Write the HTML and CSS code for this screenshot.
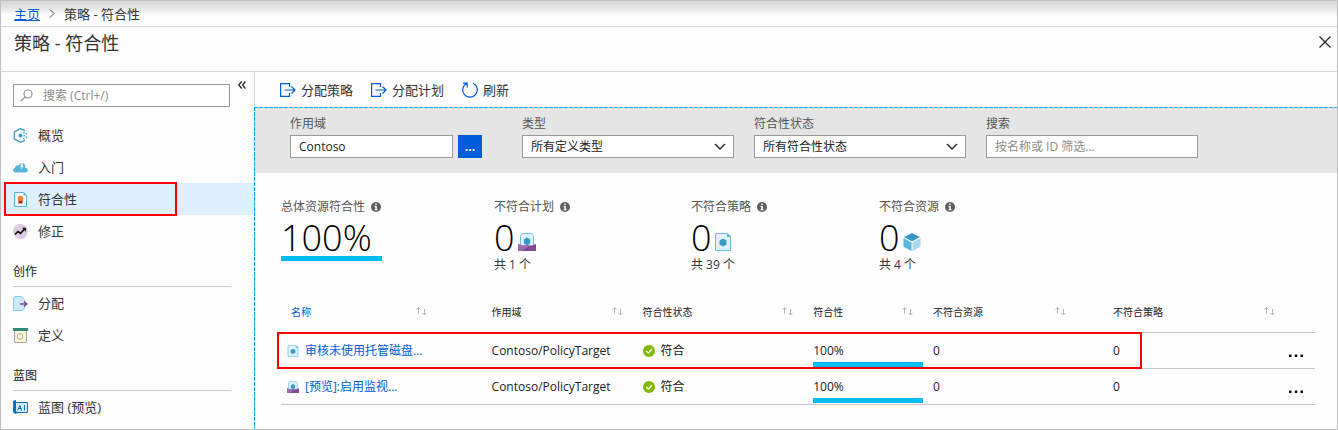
FILE: index.html
```html
<!DOCTYPE html>
<html lang="zh-CN">
<head>
<meta charset="utf-8">
<title>策略 - 符合性</title>
<link rel="stylesheet" href="styles.css">
</head>
<body>
<svg class="defs" aria-hidden="true">
  <symbol id="policy" viewBox="0 0 16 18"><path fill="#dff1f8" stroke="#6cbfdf" d="M.5.5h12l3 3v14H.5z"/><path fill="#59b4d9" d="M12 0l4 4h-4z"/><path fill="#3999c6" d="M8 5.500l3.500 2v4L8 13.500 4.500 11.500v-4z"/></symbol>
  <symbol id="initiative" viewBox="0 0 18 18"><path fill="#dff1f8" stroke="#6cbfdf" d="M2.500 14V2.500l2-2h9l2 2V14z"/><path fill="#3999c6" d="M9 4.500l3.200 2v4L9 12.500l-3.200-2v-4z"/><path fill="#804998" d="M0 11l4 1.500h10L18 11v7H0z"/><path fill="#9b6bb0" d="M0 11l4 1.500h8L4 18H0z"/></symbol>
  <symbol id="info" viewBox="0 0 10 10"><circle cx="5" cy="5" r="5" fill="#5e5e5e"/><path fill="#fff" d="M4.200 1.500h1.600v1.600H4.200zM3.500 4h2.300v3.300h.8v1H3.500v-1h.8V5h-.8z"/></symbol>
  <symbol id="assign" viewBox="0 0 16 14"><path fill="none" stroke="#015cda" stroke-width="1.200" d="M9.500 4V.6H.6v12.800h8.900V10M4.500 7H15M11.500 3.500L15 7l-3.500 3.500"/></symbol>
  <symbol id="chevron" viewBox="0 0 12 8"><path fill="none" stroke="#222" stroke-width="1.400" d="M1 1l5 5 5-5"/></symbol>
  <symbol id="sort" viewBox="0 0 12 10"><path fill="none" stroke="#b5b5b5" d="M2.500 6.500v-6M.5 2.500l2-2 2 2M8.500 2v6M6.500 6l2 2 2-2"/></symbol>
  <symbol id="check" viewBox="0 0 12 12"><circle cx="6" cy="6" r="6" fill="#7fba00"/><path fill="none" stroke="#fff" stroke-width="1.400" d="M3.200 6.100l2.100 2 3.500-3.900"/></symbol>
</svg>
<div class="portal">
  <nav class="breadcrumb" aria-label="导航">
    <a href="#">主页</a>
    <svg width="6" height="9" viewBox="0 0 6 9"><path fill="none" stroke="#444" d="M1 .5l4 4-4 4"/></svg>
    <span>策略 - 符合性</span>
  </nav>
  <header class="title">
    <h1>策略 - 符合性</h1>
    <button class="plain" aria-label="关闭"><svg width="12" height="12" viewBox="0 0 12 12"><path fill="none" stroke="#222" stroke-width="1.200" d="M.5.5l11 11M11.500.5l-11 11"/></svg></button>
  </header>
  <div class="body">
    <aside class="sidebar">
      <div class="search-row">
        <label class="search">
          <svg width="13" height="13" viewBox="0 0 13 13"><path fill="none" stroke="#888" stroke-width="1.200" d="M.8 12.200l4.400-4.400"/><circle cx="8" cy="5" r="4" fill="none" stroke="#888" stroke-width="1.100"/></svg>
          <input type="text" aria-label="搜索" placeholder="搜索 (Ctrl+/)">
        </label>
        <button class="plain" aria-label="折叠"><svg width="8" height="8" viewBox="0 0 8 8"><path fill="none" stroke="#222" stroke-width="1.200" d="M3.700.5L.8 4l2.900 3.500M7.400.5L4.500 4l2.900 3.500"/></svg></button>
      </div>
      <ul class="menu">
        <li><a href="#"><svg width="15" height="15" viewBox="0 0 15 15"><path fill="none" stroke="#3999c6" stroke-width="1.300" d="M12 2.600L7.500.7 1.300 4v7l6.200 3.300L12 12.400M1.300 6V4l2-1M1.300 9v2l2 1"/><circle cx="7.500" cy="7.500" r="2" fill="#3999c6"/><path fill="#59b4d9" d="M10 4h1.500v1.500H10zM12.500 5H14v1.500h-1.500zM10.500 7H12v1.500h-1.500zM12.500 8.500H14V10h-1.500zM10 10h1.500v1.500H10z"/></svg>概览</a></li>
        <li><a href="#"><svg width="15" height="15" viewBox="0 0 15 15"><path fill="#59b4d9" d="M2.500 12.500C-.6 12.300-.5 8.200 2 8c-.2-2.500 2.500-3.500 3.800-2.200C6.500 2.500 11.500 1.600 12.200 6v1.800c3.300.2 3.600 4.500.5 4.700z"/><path fill="#fff" d="M8.500 3l1.500 1-.8 2h1.300L8 9.500l.5-2.500H7.500z"/></svg>入门</a></li>
        <li class="active"><a href="#" aria-current="page"><svg width="15" height="15" viewBox="0 0 15 15"><path fill="#eef8fc" stroke="#59b4d9" d="M1.500.5h9l3 3v11h-12z"/><path fill="#59b4d9" d="M10.500 0l3.500 3.500h-3.500z"/><path fill="#ba141a" d="M5.500 7.500h4V12l-2-1-2 1z"/><circle cx="7.500" cy="6.500" r="2.700" fill="#f58220"/></svg>符合性</a></li>
        <li><a href="#"><svg width="15" height="15" viewBox="0 0 15 15"><circle cx="7.500" cy="7.500" r="7.500" fill="#dccbe5"/><path fill="none" stroke="#111" stroke-width="1.700" d="M2 10.500l3-3 2.500 1.800 4-4.300"/><path fill="#111" d="M9 3.800h4v4z"/></svg>修正</a></li>
      </ul>
      <h2>创作</h2>
      <ul class="menu">
        <li><a href="#"><svg width="15" height="15" viewBox="0 0 15 15"><path fill="#cdebf7" stroke="#84cbe5" d="M.5 14.500V1.500l1.500-1h6.500L11.500 4v8.500l-2 2z"/><path fill="none" stroke="#804998" stroke-width="1.500" d="M7 8h6.500M11 5.500L13.800 8 11 10.500"/></svg>分配</a></li>
        <li><a href="#"><svg width="15" height="15" viewBox="0 0 15 15"><path fill="#fff3d6" stroke="#a5a5a0" d="M1.500 2.500h12v12h-12z"/><path fill="#2c8b76" d="M0 0h15v3H0z"/><circle cx="7" cy="8.500" r="2.800" fill="none" stroke="#9fae9f"/></svg>定义</a></li>
      </ul>
      <h2>蓝图</h2>
      <ul class="menu">
        <li><a href="#"><svg width="15" height="15" viewBox="0 0 15 15"><path fill="#d5edfa" stroke="#0072c6" d="M2.500 2.500h12v10h-12z"/><path fill="#0072c6" d="M0 1l3-1v11l2 2-3 1-2-2z"/><path fill="none" stroke="#0072c6" d="M4.500 10.500l2.500-5 1.500 5M5.500 8.500h3M11.500 5v5.500"/></svg>蓝图 (预览)</a></li>
      </ul>
    </aside>
    <main>
      <div class="toolbar">
        <button class="plain"><svg width="16" height="14"><use href="#assign"/></svg>分配策略</button>
        <button class="plain"><svg width="16" height="14"><use href="#assign"/></svg>分配计划</button>
        <button class="plain"><svg width="16" height="16" viewBox="0 0 16 16"><path fill="none" stroke="#015cda" stroke-width="1.200" d="M11 1.200a7.300 7.300 0 1 1-6 0M1 1.200h4.200v4.200"/></svg>刷新</button>
      </div>
      <div class="content">
        <form class="filters">
          <div class="field"><label for="scope">作用域</label><div class="scope"><input id="scope" type="text" value="Contoso"><button type="button" aria-label="选择作用域">...</button></div></div>
          <div class="field"><label for="kind">类型</label><div class="select"><select id="kind"><option>所有定义类型</option></select><svg width="12" height="8"><use href="#chevron"/></svg></div></div>
          <div class="field"><label for="state">符合性状态</label><div class="select"><select id="state"><option>所有符合性状态</option></select><svg width="12" height="8"><use href="#chevron"/></svg></div></div>
          <div class="field"><label for="find">搜索</label><input id="find" type="text" placeholder="按名称或 ID 筛选..."></div>
        </form>
        <section class="stats">
          <div class="stat overall"><h3>总体资源符合性<svg width="10" height="10"><use href="#info"/></svg></h3><p class="big">100%</p><div class="bar"></div></div>
          <div class="stat"><h3>不符合计划<svg width="10" height="10"><use href="#info"/></svg></h3><p class="big">0<svg width="18" height="18"><use href="#initiative"/></svg></p><p class="total">共 1 个</p></div>
          <div class="stat"><h3>不符合策略<svg width="10" height="10"><use href="#info"/></svg></h3><p class="big">0<svg width="16" height="18"><use href="#policy"/></svg></p><p class="total">共 39 个</p></div>
          <div class="stat"><h3>不符合资源<svg width="10" height="10"><use href="#info"/></svg></h3><p class="big">0<svg width="18" height="18" viewBox="0 0 18 18"><path fill="#3999c6" d="M9 0l8 4-8 4.500L1 4z"/><path fill="#59b4d9" d="M.5 5L8.500 9.500V18l-8-4.200z"/><path fill="#a5d8ea" d="M17.500 5l-8 4.500V18l8-4.200z"/></svg></p><p class="total">共 4 个</p></div>
        </section>
        <table>
          <colgroup><col class="c-name"><col class="c-scope"><col class="c-state"><col class="c-rate"><col class="c-res"><col class="c-pol"><col></colgroup>
          <thead><tr>
            <th class="wide"><div><a href="#">名称</a><svg width="12" height="10"><use href="#sort"/></svg></div></th>
            <th><div>作用域<svg width="12" height="10"><use href="#sort"/></svg></div></th>
            <th><div>符合性状态<svg width="12" height="10"><use href="#sort"/></svg></div></th>
            <th><div>符合性<svg width="12" height="10"><use href="#sort"/></svg></div></th>
            <th class="mid"><div>不符合资源<svg width="12" height="10"><use href="#sort"/></svg></div></th>
            <th class="last"><div>不符合策略<svg width="12" height="10"><use href="#sort"/></svg></div></th>
            <th></th>
          </tr></thead>
          <tbody>
            <tr class="marked">
              <td class="name"><a href="#"><svg width="12" height="12"><use href="#policy"/></svg>审核未使用托管磁盘...</a></td>
              <td>Contoso/PolicyTarget</td>
              <td><span class="status"><svg width="12" height="12"><use href="#check"/></svg>符合</span></td>
              <td class="rate">100%<div class="bar"></div></td>
              <td>0</td><td>0</td>
              <td class="more"><button class="plain" aria-label="更多"><svg width="15" height="3" viewBox="0 0 15 3"><path fill="#111" d="M0 .5h2.500V3H0zM5.800.5h2.500V3H5.800zM11.500.5H14V3h-2.500z"/></svg></button></td>
            </tr>
            <tr>
              <td class="name"><a href="#"><svg width="12" height="12"><use href="#initiative"/></svg>[预览]:启用监视...</a></td>
              <td>Contoso/PolicyTarget</td>
              <td><span class="status"><svg width="12" height="12"><use href="#check"/></svg>符合</span></td>
              <td class="rate">100%<div class="bar"></div></td>
              <td>0</td><td>0</td>
              <td class="more"><button class="plain" aria-label="更多"><svg width="15" height="3" viewBox="0 0 15 3"><path fill="#111" d="M0 .5h2.500V3H0zM5.800.5h2.500V3H5.800zM11.500.5H14V3h-2.500z"/></svg></button></td>
            </tr>
          </tbody>
        </table>
      </div>
    </main>
  </div>
</div>
</body>
</html>
```
FILE: styles.css
```css
* { box-sizing: border-box; }
body, h1, h2, h3, p, ul { margin: 0; padding: 0; font-weight: 400; }
body { font: 12px/16px "Open Sans", "Noto Sans CJK SC", sans-serif; color: #333; background: #fdfdfd; }
svg { display: block; flex: none; }
a { color: #015cda; text-decoration: none; }
input, select, button { font: inherit; color: #222; border-radius: 0; }
.defs { position: absolute; width: 0; height: 0; }
.plain { display: flex; align-items: center; padding: 0; border: 0; background: none; color: #333; cursor: pointer; }

.portal { display: flex; flex-direction: column; min-height: 100vh; border: 1px solid #c0c0c0; }
.breadcrumb { display: flex; align-items: center; gap: 9px; height: 26px; padding: 0 13px; font-size: 13px; border-bottom: 1px solid #d6d6d6; background: linear-gradient(#d6d6d6, #e2e2e2 6px, #fdfdfd 14px); }
.breadcrumb a { text-decoration: underline; }
.title { display: flex; justify-content: space-between; align-items: flex-start; height: 45px; padding: 3px 6px 0 13px; border-bottom: 1px solid #d6d6d6; }
.title h1 { font-size: 18px; line-height: 26px; }
.title button { height: 24px; }
.body { display: flex; flex: 1; }

.sidebar { flex: none; width: 253px; }
.search-row { display: flex; align-items: flex-start; gap: 8px; padding: 12px 8px 0 12px; }
.search-row button { height: 2px; }
.search { display: flex; flex: 1; align-items: center; gap: 10px; height: 23px; padding: 0 6px; border: 1px solid #999; background: #fff; }
.search input { flex: 1; min-width: 0; padding: 0; border: 0; background: none; }
input::placeholder { color: #8c8c8c; }
.menu { list-style: none; }
.search-row + .menu { margin-top: 12px; }
.menu li { position: relative; }
.menu a { display: flex; align-items: center; gap: 10px; height: 32px; padding-left: 12px; font-size: 13px; color: #333; }
.menu .active { background: #dcf0fd; }
.active::after { content: ""; position: absolute; inset: -1px 77px -1px 3px; border: 2px solid #f00; pointer-events: none; }
.sidebar h2 { height: 24px; margin: 16px 23px 0 12px; font-size: 12px; line-height: 18px; color: #222; border-bottom: 1px solid #ccc; }

main { display: flex; flex: 1; flex-direction: column; min-width: 0; }
.toolbar { display: flex; gap: 18px; height: 35px; padding-left: 25px; border-left: 1px solid #d6d6d6; }
.toolbar button { gap: 5px; font-size: 13px; }
.content { flex: 1; padding: 1px 0 0 1px; background: repeating-linear-gradient(90deg, #00b4ee 0 4px, #c8d4d8 4px 5px) top / 100% 1px no-repeat, repeating-linear-gradient(#00b4ee 0 4px, #d8e4e8 4px 5px) left / 1px 100% no-repeat; }
.filters { display: grid; grid-template-columns: repeat(4, minmax(0, 212px)); gap: 20px; height: 65px; padding: 8px 20px 0 35px; background: #e5e5e5; }
.field label { display: block; height: 19px; color: #555; }
.field input, .field select { display: block; width: 100%; height: 23px; padding: 0 8px; border: 1px solid #999; background: #fff; }
.scope { display: flex; gap: 5px; padding-right: 20px; }
.scope input { flex: 1; min-width: 0; }
.scope button { width: 24px; padding: 0; border: 0; background: #015cda; color: #fff; font-weight: 700; }
.select { display: grid; align-items: center; }
.select > * { grid-area: 1 / 1; }
.select select { appearance: none; }
.select svg { justify-self: end; margin-right: 8px; pointer-events: none; }

.stats { display: grid; grid-template-columns: 213px 197px 188px 1fr; padding: 26px 26px 0; }
.stat h3 { display: flex; align-items: center; gap: 6px; font-size: 12px; color: #555; }
.big { display: flex; align-items: flex-end; gap: 3px; height: 41px; font-size: 36px; font-weight: 300; line-height: 36px; color: #000; }
.big svg { margin-bottom: 5px; }
.total { padding-top: 1px; }
.bar { height: 5px; background: #00bcf2; }
.overall .bar { width: 101px; }

table { width: calc(100% - 48px); margin: 19px 22px 0 26px; border-collapse: collapse; table-layout: fixed; }
.c-name { width: 19.400%; } .c-scope { width: 14.600%; } .c-state { width: 16.500%; }
.c-rate { width: 11.600%; } .c-res { width: 17.400%; } .c-pol { width: 17%; }
th { height: 40px; padding: 0 9px 0 10px; font-size: 10px; font-weight: 400; text-align: left; color: #222; }
th div { display: flex; align-items: center; justify-content: space-between; }
th.wide { padding-right: 54px; }
th.mid { padding-right: 36px; }
th.last { padding-right: 3px; }
tbody tr { position: relative; height: 36px; border-top: 1px solid #c4c4c4; border-bottom: 1px solid #c4c4c4; }
td { padding: 2px 0 0 10px; white-space: nowrap; color: #222; }
td.name { padding-left: 6px; }
.name a, .status { display: flex; align-items: center; gap: 6px; }
td.rate { padding-top: 9px; }
.rate .bar { margin-top: 3px; }
.more svg { margin-top: 8px; }
.marked .name::after { content: ""; position: absolute; top: -1px; bottom: -2px; left: -4px; width: 83.300%; border: 2px solid #f00; pointer-events: none; }
```
